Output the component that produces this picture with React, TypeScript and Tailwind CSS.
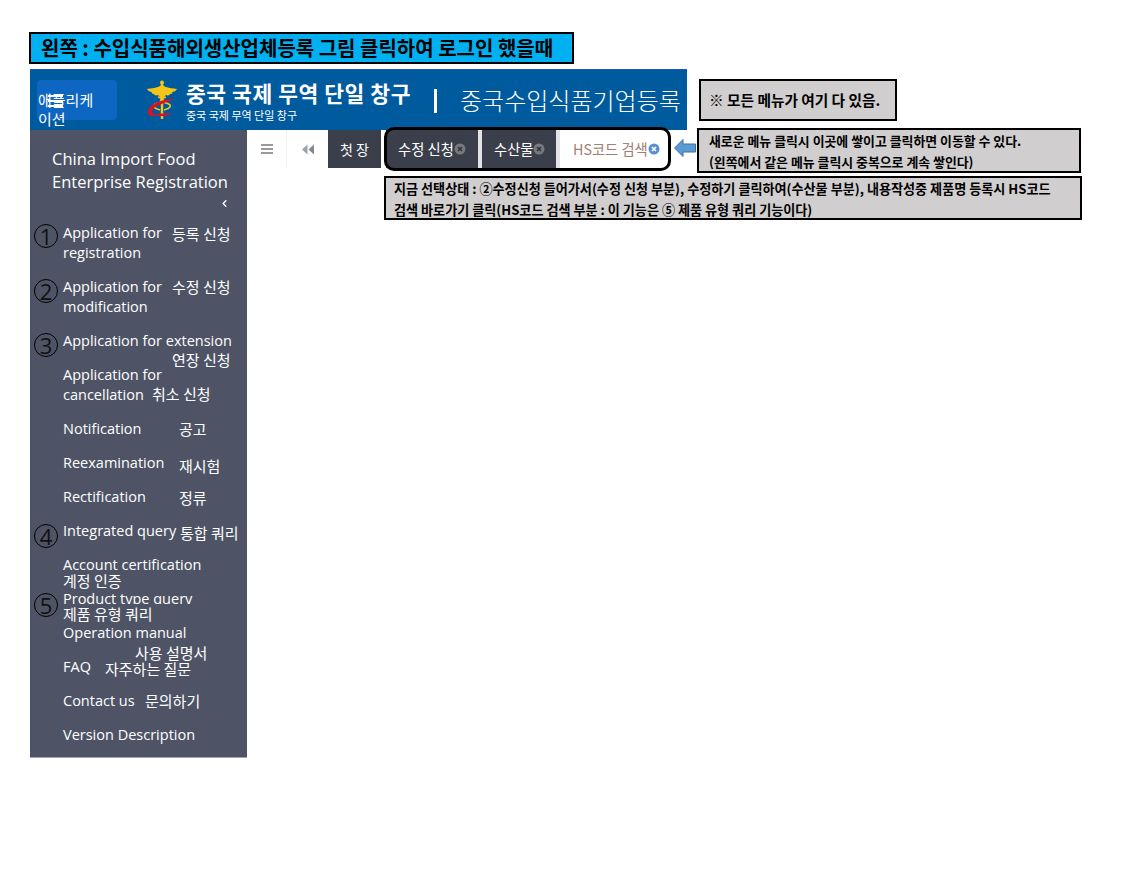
import React from "react";
import { ChevronLeft } from "lucide-react";

const latin = "font-['Open_Sans','Noto_Sans_CJK_KR',sans-serif]";
const cjk = "font-['Noto_Sans_CJK_KR',sans-serif]";

function Num({ n, cls }: { n: number; cls: string }) {
  return (
    <span className={`absolute flex h-[24px] w-[24px] items-center justify-center rounded-full border-[1.5px] border-black text-[22px] leading-none text-[#111] ${latin} ${cls}`}>
      {n}
    </span>
  );
}

function Close({ active }: { active?: boolean }) {
  return (
    <svg width="12" height="12" viewBox="0 0 12 12" className="shrink-0">
      <circle cx="6" cy="6" r="5.5" fill={active ? "#5b8fd0" : "#77797e"} />
      <path d="M4 4l4 4M8 4l-4 4" stroke={active ? "#fff" : "#2f333d"} strokeWidth="1.6" />
    </svg>
  );
}

function Row({ children, label }: { children: React.ReactNode; label?: React.ReactNode }) {
  return (
    <div className="relative whitespace-nowrap py-[7px] pl-[33px] text-[14.5px] leading-[20px] text-white">
      {children}
      {label}
    </div>
  );
}

function Ko({ children, className }: { children: React.ReactNode; className: string }) {
  return <span className={`absolute whitespace-nowrap text-[15px] leading-[18px] text-white ${cjk} ${className}`}>{children}</span>;
}

export default function App() {
  return (
    <div className={`relative h-[875px] w-[1134px] overflow-hidden bg-white pl-[30px] pt-[32px] ${latin}`}>
      <div className={`ml-[-1px] flex h-[32px] w-[545px] items-center border-[2px] border-black bg-[#00b0f0] pl-[10px] text-[20px] font-bold text-black ${cjk}`}>
        왼쪽 : 수입식품해외생산업체등록 그림 클릭하여 로그인 했을때
      </div>

      <div className="mt-[5px] flex h-[61px] w-[657px] items-center border-t border-[#1a56c4] bg-[#005a9e] text-white">
        <div className={`relative ml-[7px] h-[40px] w-[80px] rounded-[4px] bg-[#0d66c2] ${cjk}`}>
          <span className="absolute left-[1px] top-[10px] w-[66px] text-[15px] leading-[19px]">애플리케이션</span>
          <span className="absolute left-[11px] top-[15px] h-[12px] w-[15px] border-y-2 border-white after:mt-[3px] after:block after:h-[2px] after:bg-white" />
        </div>
        <svg width="32" height="40" viewBox="0 0 32 40" className="ml-[29px] shrink-0">
          <path d="M16 4 C14 7 10 8 1 9 C2 11 4 12 6 12 C5 13 6 14 8 14 C8 15 10 16 12 15 L14 17 L18 17 L20 15 C22 16 24 15 24 14 C26 14 27 13 26 12 C28 12 30 11 31 9 C22 8 18 7 16 4Z" fill="#f5c518" />
          <circle cx="16" cy="2.5" r="2" fill="#f5c518" />
          <rect x="14.8" y="3" width="2.4" height="36" fill="#f5c518" />
          <path d="M12 17c7 2 7 4 0 6s-5 5 2 7M20 17c-7 2-7 4 0 6s5 5-2 7" stroke="#f5c518" strokeWidth="1.6" fill="none" />
          <path d="M28 19 C18 19 4 23 2 31 C1 37 8 37 13 35 C7 35 5 33 7 29 C10 25 20 23 28 19Z" fill="#d9141e" />
          <path d="M11 33.5h15c-4 2-9 3.5-15 2z" fill="#d9141e" />
        </svg>
        <div className={`ml-[8px] mt-[2px] ${cjk}`}>
          <div className="whitespace-nowrap text-[21.5px] font-bold leading-[25px] tracking-[0.55px]">중국 국제 무역 단일 창구</div>
          <div className="mt-[3px] whitespace-nowrap text-[11px] leading-[14px]">중국 국제 무역 단일 창구</div>
        </div>
        <div className="ml-[23px] mt-[2px] h-[24px] w-[3px] bg-white" />
        <div className={`ml-[23px] whitespace-nowrap text-[24px] font-light ${cjk}`}>중국수입식품기업등록</div>
      </div>

      <div className="flex">
        <aside className="flex h-[628px] w-[217px] shrink-0 flex-col border-b border-[#a0a3ab] bg-[#4e5466]">
          <div className="whitespace-nowrap px-[22px] pt-[17px] text-[16.5px] leading-[23px] text-white">
            China Import Food
            <br />
            Enterprise Registration
          </div>
          <div className="flex h-[21px] justify-end pr-[17px] text-white">
            <ChevronLeft size={11} strokeWidth={3} className="mt-[5px]" />
          </div>
          <div className="mt-[2px]">
            <Row label={<><Num n={1} cls="left-[4px] top-[8px]" /><Ko className="left-[142px] top-[9px]">등록 신청</Ko></>}>Application for<br />registration</Row>
            <Row label={<><Num n={2} cls="left-[4px] top-[9px]" /><Ko className="left-[142px] top-[8px]">수정 신청</Ko></>}>Application for<br />modification</Row>
            <Row label={<><Num n={3} cls="left-[4px] top-[9px]" /><Ko className="left-[142px] top-[27px]">연장 신청</Ko></>}>Application for extension</Row>
            <Row label={<Ko className="left-[122px] top-[27px]">취소 신청</Ko>}>Application for<br />cancellation</Row>
            <Row label={<Ko className="left-[149px] top-[8px]">공고</Ko>}>Notification</Row>
            <Row label={<Ko className="left-[149px] top-[11px]">재시험</Ko>}>Reexamination</Row>
            <Row label={<Ko className="left-[149px] top-[9px]">정류</Ko>}>Rectification</Row>
            <Row label={<><Num n={4} cls="left-[4px] top-[10px]" /><Ko className="left-[150px] top-[10px]">통합 쿼리</Ko></>}>Integrated query</Row>
            <Row label={<Ko className="left-[33px] top-[24px]">계정 인증</Ko>}>Account certification</Row>
            <Row label={<><Num n={5} cls="left-[4px] top-[11px]" /><Ko className="left-[33px] top-[22px] w-[130px] bg-[#4e5466] pt-[1px]">제품 유형 쿼리</Ko></>}>Product type query</Row>
            <Row label={<Ko className="left-[105px] top-[28px]">사용 설명서</Ko>}>Operation manual</Row>
            <Row label={<Ko className="left-[75px] top-[10px]">자주하는 질문</Ko>}>FAQ</Row>
            <Row label={<Ko className="left-[115px] top-[8px]">문의하기</Ko>}>Contact us</Row>
            <Row>Version Description</Row>
          </div>
        </aside>

        <div className="flex h-[38px] min-w-0 items-stretch">
          <div className="flex w-[40px] items-center justify-center border-r border-[#f0f0f0]">
            <span className="h-[10px] w-[12px] border-y-2 border-[#9a9a9a] after:mt-[2px] after:block after:h-[2px] after:bg-[#9a9a9a]" />
          </div>
          <div className="flex w-[41px] items-center justify-center">
            <svg width="12" height="11" viewBox="0 0 12 11">
              <path d="M5.5 0.5V10.5L0 5.5Z" fill="#9aa3a8" />
              <path d="M12 0.5V10.5L6.5 5.5Z" fill="#7f8a90" />
            </svg>
          </div>
          <div className={`flex w-[53px] items-center justify-center bg-[#3a3f4b] text-[14px] text-white ${cjk}`}>첫 장</div>
          <div className={`ml-[5px] flex w-[92px] items-center bg-[#3a3f4b] pl-[12px] text-[14.3px] text-white ${cjk}`}>수정 신청<Close /></div>
          <div className="w-[4px] bg-[#e4e4e6]" />
          <div className={`flex w-[74px] items-center bg-[#3a3f4b] pl-[12px] text-[14.3px] text-white ${cjk}`}>수산물<Close /></div>
          <div className="w-[4px] bg-[#e4e4e6]" />
          <div className={`flex w-[100px] items-center bg-white pl-[13px] text-[14.3px] text-[#a08070] ${cjk}`}>HS코드 검색<Close active /></div>
        </div>
      </div>

      {/* annotations lying over the screenshot */}
      <div className="absolute left-[384px] top-[127px] h-[44px] w-[287px] rounded-[10px] border-[3px] border-black" />
      <svg width="22" height="18" viewBox="0 0 22 18" className="absolute left-[674px] top-[139px]">
        <path d="M0.5 9L9 0.5V5H21.5V13H9V17.5Z" fill="#5b9bd5" stroke="#41719c" />
      </svg>
      <div className={`absolute left-[699px] top-[79px] flex h-[42px] w-[198px] items-center border-[2px] border-black bg-[#d0cece] pl-[8px] text-[14.7px] font-bold text-black ${cjk}`}>※ 모든 메뉴가 여기 다 있음.</div>
      <div className={`absolute left-[697px] top-[128px] h-[45px] w-[384px] border-[2px] border-black bg-[#d0cece] pl-[10px] text-[12.9px] font-bold leading-[21px] text-black ${cjk}`}>
        새로운 메뉴 클릭시 이곳에 쌓이고 클릭하면 이동할 수 있다.
        <br />
        (왼쪽에서 같은 메뉴 클릭시 중복으로 계속 쌓인다)
      </div>
      <div className={`absolute left-[384px] top-[176px] h-[44px] w-[698px] border-[2px] border-black bg-[#d0cece] pl-[8px] text-[13.1px] font-bold leading-[21px] text-black ${cjk}`}>
        지금 선택상태 : ②수정신청 들어가서(수정 신청 부분), 수정하기 클릭하여(수산물 부분), 내용작성중 제품명 등록시 HS코드
        <br />
        검색 바로가기 클릭(HS코드 검색 부분 : 이 기능은 ⑤ 제품 유형 쿼리 기능이다)
      </div>
    </div>
  );
}
